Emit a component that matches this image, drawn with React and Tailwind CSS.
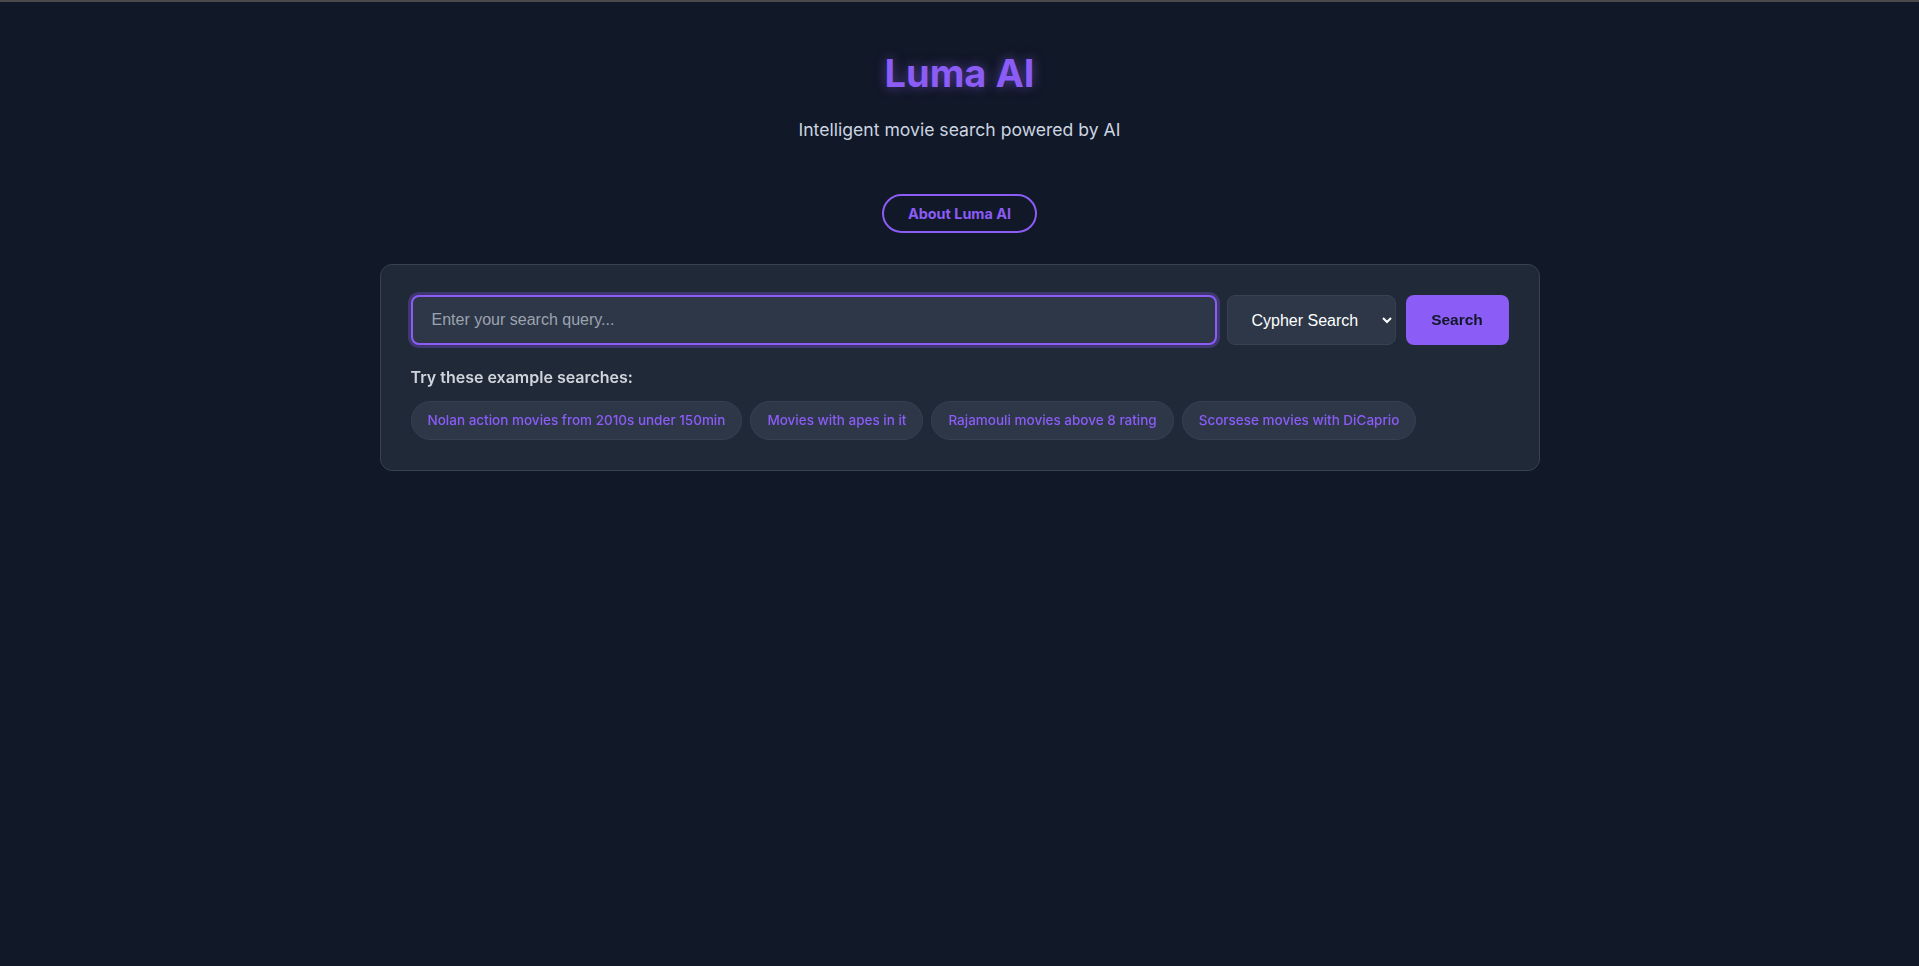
import { useState } from "react";

const EXAMPLES = [
  "Nolan action movies from 2010s under 150min",
  "Movies with apes in it",
  "Rajamouli movies above 8 rating",
  "Scorsese movies with DiCaprio",
];

export default function App() {
  const [query, setQuery] = useState("");
  const [mode, setMode] = useState("cypher");

  return (
    <div className="min-h-screen bg-[#111827] font-['Inter',sans-serif]">
      {/* top edge line */}
      <div className="h-[2px] bg-[#4a4a4a]" />

      <div className="flex flex-col items-center pt-[48px]">
        <h1 className="text-[38px] leading-[46px] font-bold text-[#8b5cf6] [text-shadow:0_0_12px_rgba(139,92,246,0.55)]">
          Luma AI
        </h1>
        <p className="mt-5 text-[17.6px] leading-7 text-[#cbd5e1]">
          Intelligent movie search powered by AI
        </p>

        <button className="mt-[50px] rounded-full border-2 border-[#8b5cf6] px-6 py-2 text-[14.4px] leading-[19px] font-bold text-[#8b5cf6]">
          About Luma AI
        </button>

        {/* search card */}
        <div className="mt-[31px] w-[1160px] rounded-xl border border-[#374151] bg-[#1f2937] p-[30px]">
          <div className="flex items-stretch gap-[10px] h-[50px]">
            <input
              autoFocus
              value={query}
              onChange={(e) => setQuery(e.target.value)}
              placeholder="Enter your search query..."
              className="flex-1 rounded-lg border-2 border-[#8b5cf6] bg-[#2d3748] px-[19px] text-base text-white font-['Liberation_Sans',sans-serif] placeholder:text-[#9ca3af] outline-none shadow-[0_0_0_3px_rgba(139,92,246,0.3)]"
            />
            <select
              value={mode}
              onChange={(e) => setMode(e.target.value)}
              className="w-[169px] rounded-lg border border-[#374151] bg-[#2d3748] pl-[20px] pr-[6px] text-base text-white font-['Liberation_Sans',sans-serif] outline-none"
            >
              <option value="cypher">Cypher Search</option>
              <option value="vector">Vector Search</option>
            </select>
            <button className="w-[103px] rounded-lg bg-[#8b5cf6] text-[15.5px] font-bold text-[#111827] font-['Liberation_Sans',sans-serif]">
              Search
            </button>
          </div>

          <p className="mt-5 text-base leading-6 font-semibold text-[#d1d5db]">
            Try these example searches:
          </p>

          <div className="mt-3 flex flex-wrap gap-2">
            {EXAMPLES.map((ex) => (
              <button
                key={ex}
                onClick={() => setQuery(ex)}
                className="rounded-full border border-[#374151] bg-[#2d3748] px-4 py-[9px] text-[13.5px] leading-[19px] font-medium text-[#8b5cf6]"
              >
                {ex}
              </button>
            ))}
          </div>
        </div>
      </div>
    </div>
  );
}
